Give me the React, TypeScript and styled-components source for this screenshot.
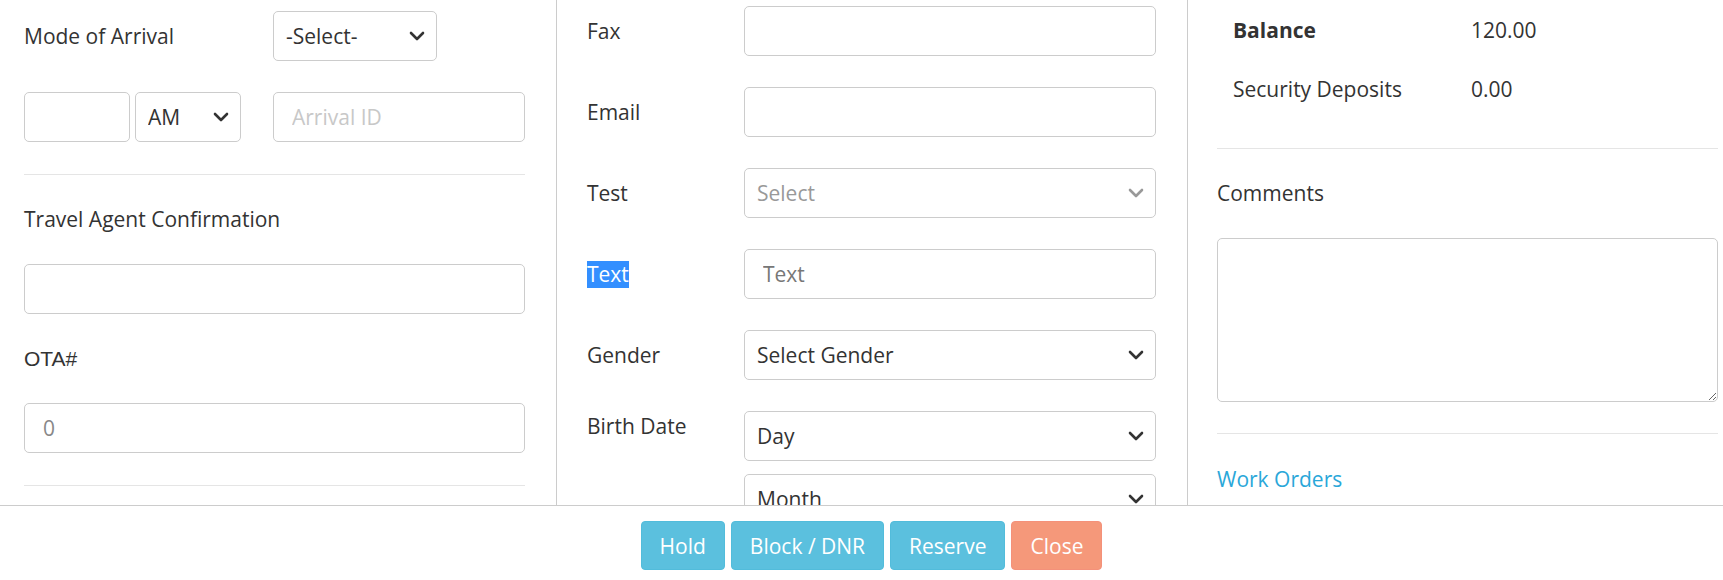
import styled, { createGlobalStyle } from 'styled-components';

const GlobalStyle = createGlobalStyle`
  * { box-sizing: border-box; }
  html, body { margin: 0; padding: 0; background: #fff; }
  body {
    font-family: "Open Sans", "Liberation Sans", sans-serif;
    font-size: 21px;
    line-height: 30px;
    color: #333;
  }
`;

const Page = styled.div`
  width: 1723px;
  height: 580px;
  display: flex;
  flex-direction: column;
  overflow: hidden;
`;

const Body = styled.div`
  height: 505px;
  display: grid;
  grid-template-columns: 557px 631px 1fr;
  overflow: hidden;
`;

const LeftCol = styled.div`
  padding: 11px 31px 0 24px;
  border-right: 1px solid #ccc;
`;

const MidCol = styled.div`
  padding: 6px 31px 0 30px;
  border-right: 1px solid #ccc;
`;

const RightCol = styled.div`
  padding: 15px 5px 0 29px;
`;

const Row = styled.div<{ $mt?: number }>`
  display: flex;
  align-items: center;
  margin-top: ${(p) => p.$mt ?? 0}px;
`;

const Label = styled.div<{ $w?: number; $mt?: number }>`
  width: ${(p) => (p.$w ? `${p.$w}px` : 'auto')};
  margin-top: ${(p) => p.$mt ?? 0}px;
  flex-shrink: 0;
  line-height: 30px;
`;

const ArialLabel = styled(Label)`
  font-family: "Liberation Sans", Arial, sans-serif;
  font-size: 21px;
`;

const Selected = styled.span`
  display: inline-block;
  background: #338fff;
  color: #fff;
  line-height: 27px;
`;

const Input = styled.input<{ $w?: number; $ml?: number; $mt?: number; $ph?: string }>`
  display: block;
  width: ${(p) => (p.$w ? `${p.$w}px` : '100%')};
  height: 50px;
  margin: ${(p) => p.$mt ?? 0}px 0 0 ${(p) => p.$ml ?? 0}px;
  padding: 0 18px;
  border: 1px solid #ccc;
  border-radius: 5px;
  background: #fff;
  font-family: inherit;
  font-size: 21px;
  color: #333;
  outline: none;

  &::placeholder {
    color: ${(p) => p.$ph ?? '#999'};
    opacity: 1;
  }
`;

const SelectWrap = styled.div<{ $w?: number; $ml?: number; $mt?: number }>`
  position: relative;
  width: ${(p) => (p.$w ? `${p.$w}px` : '100%')};
  margin: ${(p) => p.$mt ?? 0}px 0 0 ${(p) => p.$ml ?? 0}px;
  flex-shrink: 0;
`;

const SelectEl = styled.select<{ $muted?: boolean }>`
  appearance: none;
  -webkit-appearance: none;
  display: block;
  width: 100%;
  height: 50px;
  padding: 0 40px 0 12px;
  border: 1px solid #ccc;
  border-radius: 5px;
  background: #fff;
  font-family: inherit;
  font-size: 21px;
  color: ${(p) => (p.$muted ? '#999' : '#333')};
  outline: none;
`;

const Chevron = styled.svg<{ $muted?: boolean }>`
  position: absolute;
  right: 12px;
  top: 50%;
  width: 16px;
  height: 10px;
  transform: translateY(-50%);
  pointer-events: none;
  stroke: ${(p) => (p.$muted ? '#999' : '#333')};
`;

const Divider = styled.div<{ $mt: number }>`
  height: 1px;
  margin-top: ${(p) => p.$mt}px;
  background: #e5e5e5;
`;

const FormRow = styled.div<{ $top?: boolean; $mb?: number }>`
  display: grid;
  grid-template-columns: 157px 1fr;
  align-items: ${(p) => (p.$top ? 'start' : 'center')};
  margin-bottom: ${(p) => p.$mb ?? 31}px;
`;

const Stack = styled.div`
  display: flex;
  flex-direction: column;
  gap: 13px;
`;

const InfoRow = styled.div<{ $mb: number }>`
  display: grid;
  grid-template-columns: 238px auto;
  padding-left: 16px;
  line-height: 30px;
  margin-bottom: ${(p) => p.$mb}px;
`;

const Bold = styled.span`
  font-weight: 700;
`;

const Comments = styled.textarea`
  display: block;
  width: 100%;
  height: 164px;
  margin-top: 30px;
  border: 1px solid #ccc;
  border-radius: 5px;
  font-family: inherit;
  font-size: 21px;
  resize: vertical;
  outline: none;
`;

const LinkText = styled.a`
  display: block;
  margin-top: 30px;
  color: #2aa7d9;
  text-decoration: none;
  line-height: 30px;
`;

const Footer = styled.div`
  height: 75px;
  border-top: 1px solid #ccc;
  display: flex;
  justify-content: center;
  align-items: flex-start;
  gap: 6px;
  padding: 15px 0 0 20px;
`;

const Button = styled.button<{ $danger?: boolean }>`
  height: 49px;
  padding: 0 18px;
  border: 1px solid ${(p) => (p.$danger ? '#f4917a' : '#52bcdb')};
  border-radius: 4px;
  background: ${(p) => (p.$danger ? '#f5987a' : '#5bc0de')};
  color: #fff;
  font-family: "Open Sans", sans-serif;
  font-size: 21px;
  line-height: 30px;
  cursor: pointer;
`;

function Select({
  value,
  w,
  ml,
  mt,
  muted,
}: {
  value: string;
  w?: number;
  ml?: number;
  mt?: number;
  muted?: boolean;
}) {
  return (
    <SelectWrap $w={w} $ml={ml} $mt={mt}>
      <SelectEl $muted={muted} defaultValue={value}>
        <option value={value}>{value}</option>
      </SelectEl>
      <Chevron $muted={muted} viewBox="0 0 16 10" fill="none" strokeWidth="2.6" strokeLinecap="round" strokeLinejoin="round">
        <polyline points="2,2 8,8 14,2" />
      </Chevron>
    </SelectWrap>
  );
}

export default function App() {
  return (
    <Page>
      <GlobalStyle />
      <Body>
        <LeftCol>
          <Row>
            <Label $w={249}>Mode of Arrival</Label>
            <Select value="-Select-" w={164} />
          </Row>
          <Row $mt={31}>
            <Input $w={106} />
            <Select value="AM" w={106} ml={5} />
            <Input $w={252} $ml={32} placeholder="Arrival ID" $ph="#c8c8c8" />
          </Row>
          <Divider $mt={32} />
          <Label $mt={29}>Travel Agent Confirmation</Label>
          <Input $mt={30} />
          <ArialLabel $mt={30}>OTA#</ArialLabel>
          <Input $mt={29} placeholder="0" $ph="#888" />
          <Divider $mt={32} />
        </LeftCol>

        <MidCol>
          <FormRow>
            <Label>Fax</Label>
            <Input />
          </FormRow>
          <FormRow>
            <Label>Email</Label>
            <Input />
          </FormRow>
          <FormRow>
            <Label>Test</Label>
            <Select value="Select" muted />
          </FormRow>
          <FormRow>
            <Label>
              <Selected>Text</Selected>
            </Label>
            <Input placeholder="Text" $ph="#777" />
          </FormRow>
          <FormRow>
            <Label>Gender</Label>
            <Select value="Select Gender" />
          </FormRow>
          <FormRow $top $mb={0}>
            <Label>Birth Date</Label>
            <Stack>
              <Select value="Day" />
              <Select value="Month" />
            </Stack>
          </FormRow>
        </MidCol>

        <RightCol>
          <InfoRow $mb={29}>
            <Bold>Balance</Bold>
            <span>120.00</span>
          </InfoRow>
          <InfoRow $mb={0}>
            <span>Security Deposits</span>
            <span>0.00</span>
          </InfoRow>
          <Divider $mt={44} />
          <Label $mt={29}>Comments</Label>
          <Comments />
          <Divider $mt={31} />
          <LinkText href="#">Work Orders</LinkText>
        </RightCol>
      </Body>
      <Footer>
        <Button>Hold</Button>
        <Button>Block / DNR</Button>
        <Button>Reserve</Button>
        <Button $danger>Close</Button>
      </Footer>
    </Page>
  );
}
